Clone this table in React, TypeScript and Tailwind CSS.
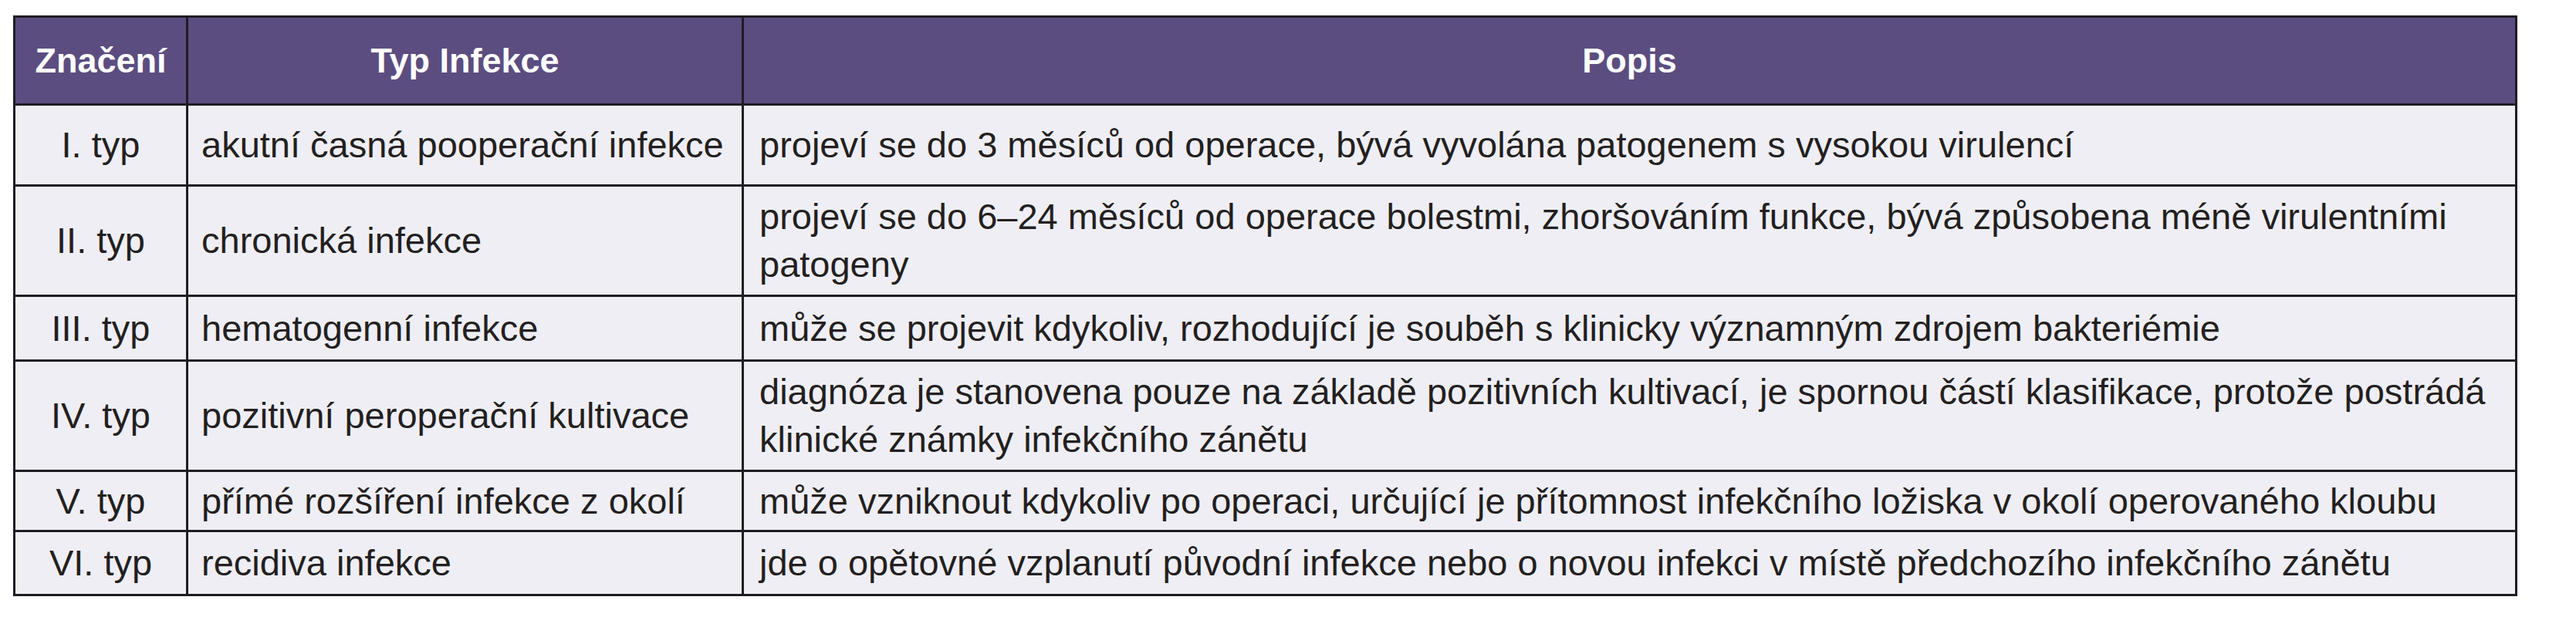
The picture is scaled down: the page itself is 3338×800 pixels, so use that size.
const rows = [
  {
    mark: "I. typ",
    type: "akutní časná pooperační infekce",
    desc: ["projeví se do 3 měsíců od operace, bývá vyvolána patogenem s vysokou virulencí"],
    h: "h-[105px]",
  },
  {
    mark: "II. typ",
    type: "chronická infekce",
    desc: [
      "projeví se do 6–24 měsíců od operace bolestmi, zhoršováním funkce, bývá způsobena méně virulentními",
      "patogeny",
    ],
    h: "h-[143px]",
  },
  {
    mark: "III. typ",
    type: "hematogenní infekce",
    desc: ["může se projevit kdykoliv, rozhodující je souběh s klinicky významným zdrojem bakteriémie"],
    h: "h-[84px]",
  },
  {
    mark: "IV. typ",
    type: "pozitivní peroperační kultivace",
    desc: [
      "diagnóza je stanovena pouze na základě pozitivních kultivací, je spornou částí klasifikace, protože postrádá",
      "klinické známky infekčního zánětu",
    ],
    h: "h-[143px]",
  },
  {
    mark: "V. typ",
    type: "přímé rozšíření infekce z okolí",
    desc: ["může vzniknout kdykoliv po operaci, určující je přítomnost infekčního ložiska v okolí operovaného kloubu"],
    h: "h-[78px]",
  },
  {
    mark: "VI. typ",
    type: "recidiva infekce",
    desc: ["jde o opětovné vzplanutí původní infekce nebo o novou infekci v místě předchozího infekčního zánětu"],
    h: "h-[83px]",
  },
];

export default function App() {
  return (
    <div className="min-h-[800px] w-[3338px] bg-white pl-[17px] pt-[20px] font-['Liberation_Sans',Arial,sans-serif]">
      <table className="w-[3245px] table-fixed border-collapse border-[3px] border-[#201c24] text-[47px] leading-[62px] text-[#231f20]">
        <colgroup>
          <col className="w-[224px]" />
          <col className="w-[720px]" />
          <col />
        </colgroup>
        <thead>
          <tr className="h-[114px] bg-[#5c4d80] text-white">
            <th className="border-[3px] border-[#201c24] px-2 text-[45px] font-bold">Značení</th>
            <th className="border-[3px] border-[#201c24] px-2 text-[45px] font-bold">Typ Infekce</th>
            <th className="border-[3px] border-[#201c24] px-2 text-[45px] font-bold">Popis</th>
          </tr>
        </thead>
        <tbody className="bg-[#efeef5]">
          {rows.map((r) => (
            <tr key={r.mark} className={r.h}>
              <td className="border-[3px] border-[#201c24] px-2 text-center align-middle">{r.mark}</td>
              <td className="border-[3px] border-[#201c24] pl-[17px] pr-2 align-middle whitespace-nowrap">{r.type}</td>
              <td className="border-[3px] border-[#201c24] pl-[20px] pr-2 align-middle">
                {r.desc.map((line) => (
                  <div key={line} className="whitespace-nowrap">
                    {line}
                  </div>
                ))}
              </td>
            </tr>
          ))}
        </tbody>
      </table>
    </div>
  );
}
